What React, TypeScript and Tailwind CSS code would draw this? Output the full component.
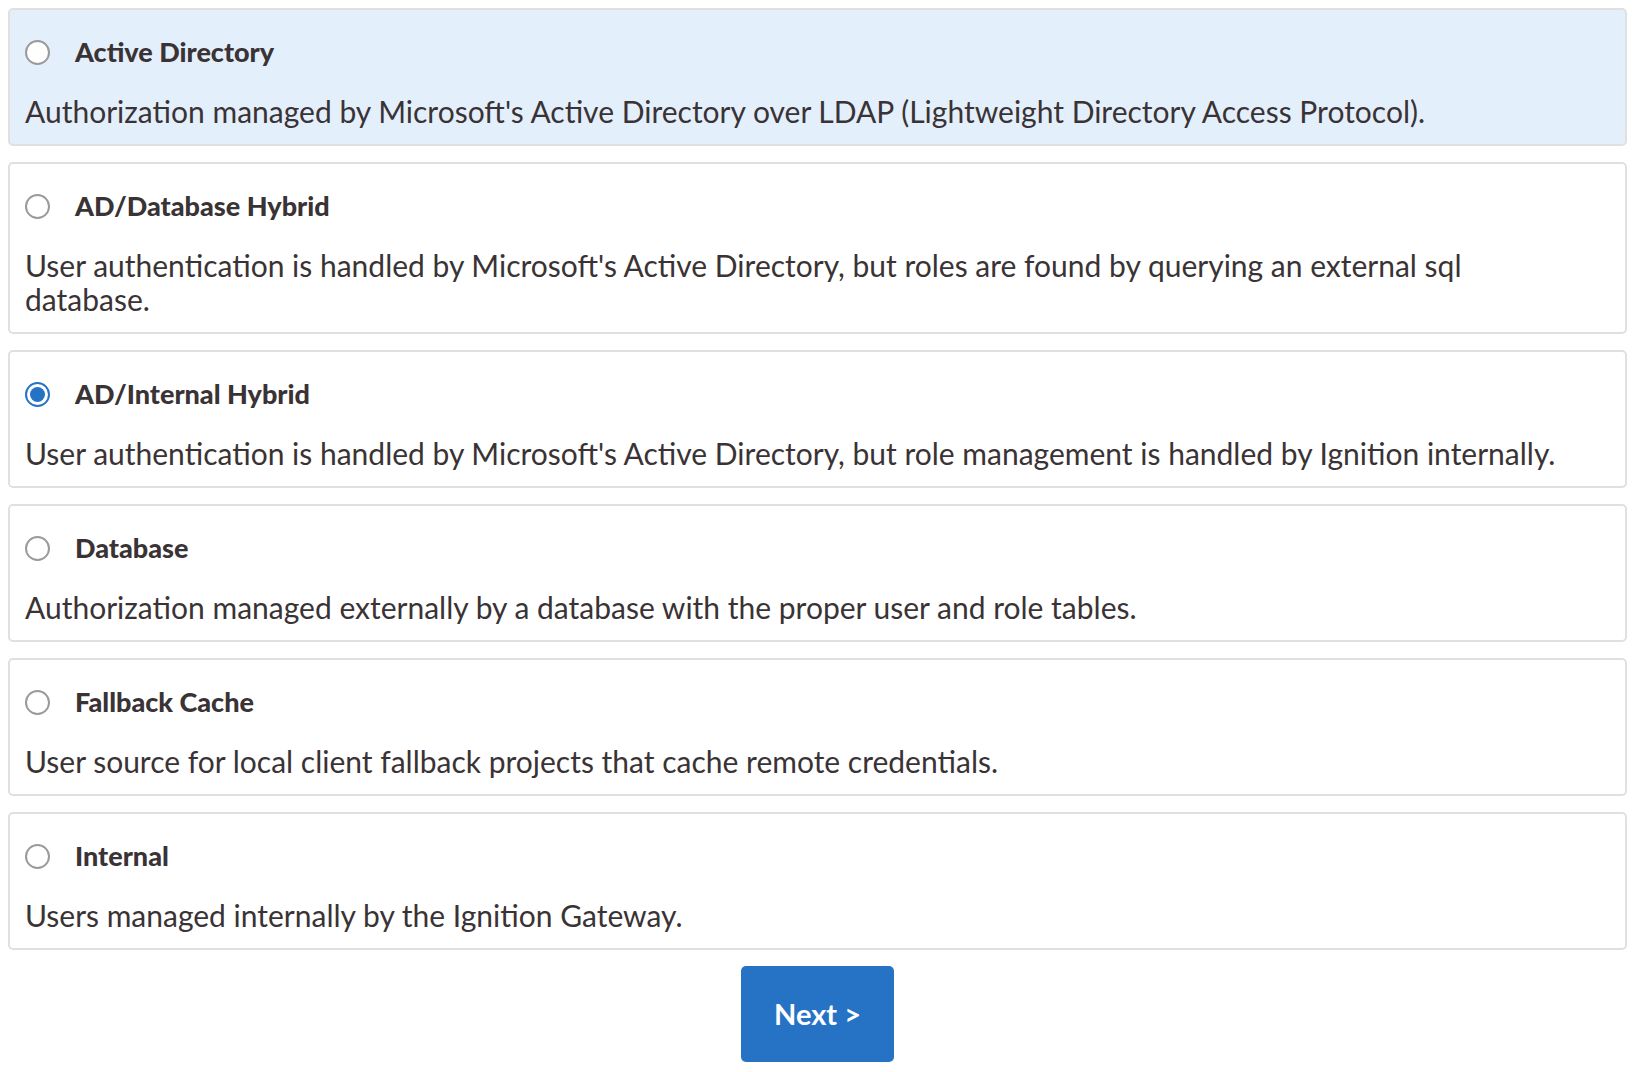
import { useState } from 'react';

const sources = [
  {
    id: 'ad',
    title: 'Active Directory',
    desc: "Authorization managed by Microsoft's Active Directory over LDAP (Lightweight Directory Access Protocol).",
  },
  {
    id: 'ad-db',
    title: 'AD/Database Hybrid',
    desc: "User authentication is handled by Microsoft's Active Directory, but roles are found by querying an external sql database.",
  },
  {
    id: 'ad-internal',
    title: 'AD/Internal Hybrid',
    desc: "User authentication is handled by Microsoft's Active Directory, but role management is handled by Ignition internally.",
  },
  {
    id: 'db',
    title: 'Database',
    desc: 'Authorization managed externally by a database with the proper user and role tables.',
  },
  {
    id: 'fallback',
    title: 'Fallback Cache',
    desc: 'User source for local client fallback projects that cache remote credentials.',
  },
  {
    id: 'internal',
    title: 'Internal',
    desc: 'Users managed internally by the Ignition Gateway.',
  },
];

function Radio({ checked }: { checked: boolean }) {
  if (checked) {
    return (
      <span className="w-[25px] h-[25px] rounded-full border-2 border-[#2673c6] flex items-center justify-center shrink-0">
        <span className="w-[15px] h-[15px] rounded-full bg-[#2673c6]" />
      </span>
    );
  }
  return <span className="w-[25px] h-[25px] rounded-full border-2 border-[#9a9a9a] bg-white shrink-0" />;
}

export default function App() {
  const [selected, setSelected] = useState('ad-internal');
  const [hovered] = useState('ad');

  return (
    <div className="min-h-screen bg-white pt-2 px-2 pb-2 text-[#3a3335]" style={{ fontFamily: 'Lato, "Open Sans", sans-serif' }}>
      <div className="flex flex-col gap-[16px]">
        {sources.map(s => (
          <div
            key={s.id}
            onClick={() => setSelected(s.id)}
            className={`rounded-[5px] border-2 border-[#e0e0e0] pl-[15px] pr-[54px] pt-[25px] pb-[16px] cursor-pointer ${hovered === s.id ? 'bg-[#e4effc]' : 'bg-white'}`}
          >
            <div className="flex items-center h-[34px]">
              <Radio checked={selected === s.id} />
              <span className="ml-[25px] text-[27px] font-black leading-[34px]">{s.title}</span>
            </div>
            <p className="mt-[25px] text-[30px] leading-[34px]">{s.desc}</p>
          </div>
        ))}
      </div>
      <div className="flex justify-center mt-[16px]">
        <button className="w-[153px] h-[96px] rounded-[5px] bg-[#2673c6] text-white text-[29px] font-bold">
          Next &gt;
        </button>
      </div>
    </div>
  );
}
